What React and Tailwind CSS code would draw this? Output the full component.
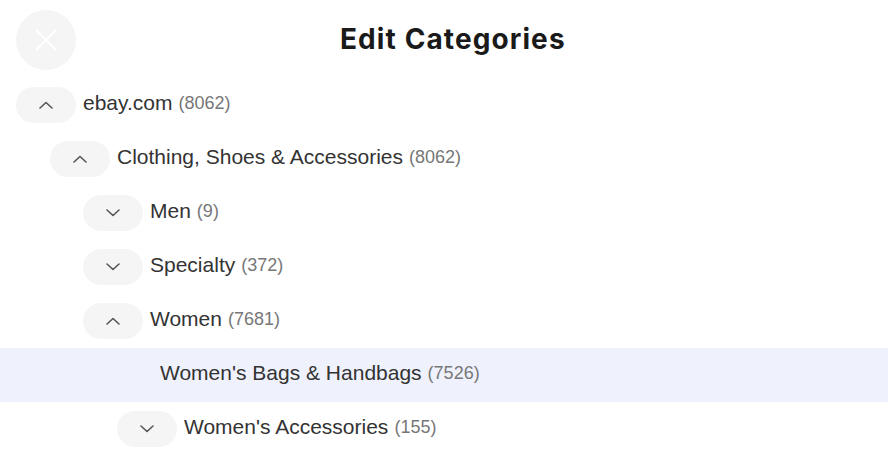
import React from "react";

const rows = [
  { label: "ebay.com", count: 8062, level: 0, open: true },
  { label: "Clothing, Shoes & Accessories", count: 8062, level: 1, open: true },
  { label: "Men", count: 9, level: 2, open: false },
  { label: "Specialty", count: 372, level: 2, open: false },
  { label: "Women", count: 7681, level: 2, open: true },
  { label: "Women's Bags & Handbags", count: 7526, level: 3, leaf: true, selected: true },
  { label: "Women's Accessories", count: 155, level: 3, open: false },
];

const indents = ["pl-[16px]", "pl-[50px]", "pl-[83px]", "pl-[117px]"];

function Chevron({ up }) {
  return (
    <svg width="14" height="8" viewBox="0 0 14 8" fill="none">
      {up ? (
        <path d="M1 7L7 1.5L13 7" stroke="#555" strokeWidth="1.6" strokeLinecap="round" strokeLinejoin="round" />
      ) : (
        <path d="M1 1L7 6.5L13 1" stroke="#555" strokeWidth="1.6" strokeLinecap="round" strokeLinejoin="round" />
      )}
    </svg>
  );
}

function Row({ row }) {
  if (row.leaf) {
    return (
      <div className={`flex h-[54px] items-center pl-[160px] ${row.selected ? "bg-[#eff2fd]" : ""}`}>
        <span className="-mt-[4px] text-[21px] text-[#333]">{row.label}</span>
        <span className="-mt-[4px] ml-[6px] text-[18px] text-[#777]">({row.count})</span>
      </div>
    );
  }
  return (
    <div className={`flex h-[54px] items-center ${indents[row.level]}`}>
      <button
        type="button"
        className="flex h-[36px] w-[60px] items-center justify-center rounded-full bg-[#f5f5f5]"
      >
        <Chevron up={row.open} />
      </button>
      <span className="-mt-[4px] ml-[7px] text-[21px] text-[#333]">{row.label}</span>
      <span className="-mt-[4px] ml-[6px] text-[18px] text-[#777]">({row.count})</span>
    </div>
  );
}

export default function App() {
  return (
    <div className="h-[467px] w-[888px] overflow-hidden bg-white font-['Liberation_Sans',Arial,sans-serif]">
      <div className="flex h-[78px] items-start">
        <button
          type="button"
          className="ml-[16px] mt-[10px] flex h-[60px] w-[60px] items-center justify-center rounded-full bg-[#f5f5f5]"
        >
          <svg width="22" height="22" viewBox="0 0 22 22" fill="none">
            <path d="M2 2L20 20M20 2L2 20" stroke="#fff" strokeWidth="2.2" strokeLinecap="round" />
          </svg>
        </button>
        <h1 className="ml-[264px] mt-[20px] font-['Inter',sans-serif] text-[28px] leading-[38px] font-bold tracking-[1.1px] text-[#1a1a1a]">
          Edit Categories
        </h1>
      </div>
      <div>
        {rows.map((r) => (
          <Row key={r.label} row={r} />
        ))}
      </div>
    </div>
  );
}
